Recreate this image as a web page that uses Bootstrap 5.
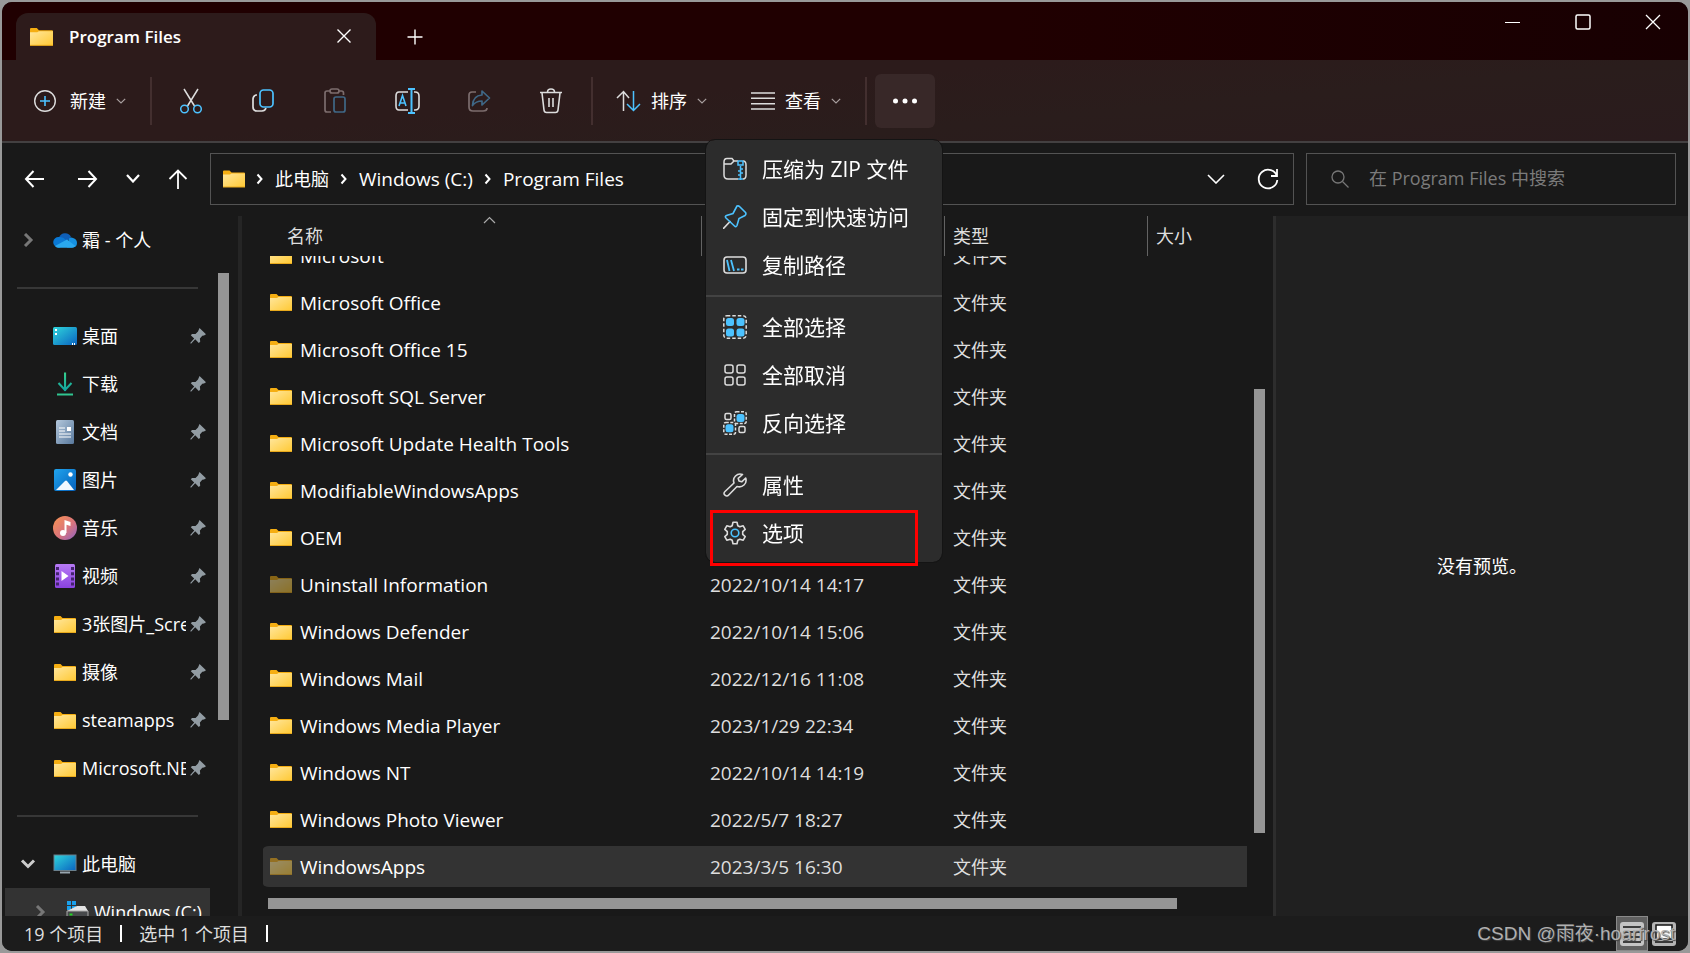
<!DOCTYPE html>
<html lang="zh-CN" data-bs-theme="dark">
<head>
<meta charset="utf-8">
<meta name="viewport" content="width=device-width, initial-scale=1">
<title>Program Files</title>
<link href="https://cdn.jsdelivr.net/npm/bootstrap@5.3.0/dist/css/bootstrap.min.css" rel="stylesheet">
<style>
  :root { --panel:#191919; --accent:#4cc2ff; --line:#535353; --thumb:#959595; }
  body { background:#999; font-family:"Open Sans","Noto Sans CJK SC",sans-serif; font-size:18px; line-height:24px; color:#fff; padding:2px; }
  svg { display:block; flex:none; }
  .latin { font-size:19px; }
  .explorer { background:var(--panel); border-radius:10px; }
  .btn { --bs-btn-color:#fff; --bs-btn-padding-x:0; --bs-btn-padding-y:0; --bs-btn-font-size:18px; --bs-btn-line-height:24px; --bs-btn-border-width:0px; --bs-btn-disabled-color:#fff; }

  /* title bar */
  .titlebar { height:58px; background:linear-gradient(90deg,#200001 60%,#180002); padding-left:14px; border-radius:10px 10px 0 0; }
  .tab { width:360px; height:47px; background:#2d1b1b; border-radius:12px 12px 0 0; padding:0 22px 0 14px; gap:16px; }
  .tab-title { font-size:17px; font-weight:600; }
  .new-tab { height:47px; }
  .caption { width:70px; height:40px; }

  /* command bar */
  .commands { height:83px; background:linear-gradient(175deg,#2c1b1b 40%,#2a1d1c 65%,#2a1b1d); border-bottom:2px solid #434041; padding-left:32px; }
  .tool { width:48px; height:54px; }
  .tool-label { margin:0 10px; }
  .rule { width:2px; height:48px; background:#432f2f; }
  .tools { margin-left:15px; }
  .sort-menu { margin-left:23px; }
  .view-menu { margin-left:44px; }
  .more { width:60px; height:54px; border-radius:6px; background:#382828; }
  .more-menu { --bs-dropdown-bg:#2c2c2c; --bs-dropdown-border-color:#141414; --bs-dropdown-padding-y:5px; --bs-dropdown-border-radius:10px;
    --bs-dropdown-link-color:#fff; --bs-dropdown-item-padding-x:17px; --bs-dropdown-item-padding-y:0; --bs-dropdown-font-size:21px;
    --bs-dropdown-divider-bg:#434343; --bs-dropdown-divider-margin-y:6px; --bs-dropdown-min-width:238px; top:65px; right:-8px; }
  .more-menu .dropdown-item { height:48px; gap:15px; }
  .more-menu .dropdown-divider { border-width:2px; opacity:1; }
  .callout { position:absolute; inset:1px 24px -9px 4px; border:3px solid #f00; pointer-events:none; }

  /* address row */
  .address { height:73px; padding:0 12px 2px 22px; }
  .field { height:52px; border:1px solid var(--line); }
  .back { margin-right:34px; }
  .path { margin:0 12px 0 22px; padding:0 14px 0 12px; }
  .search { width:370px; }
  .search input { background:none !important; border:0; box-shadow:none !important; color:#fff; font-size:18px; padding:0; }
  .search input::placeholder { color:#7b7b7b; opacity:1; }

  /* navigation pane */
  .nav-pane { width:240px; border-right:4px solid #252525; }
  .tree { width:208px; padding-left:3px; }
  .tree-item { height:48px; color:#fff; padding-left:15px; text-decoration:none; }
  .tree-item:hover { color:#fff; }
  .twist { width:16px; }
  .tree-icon { width:24px; margin-left:17px; margin-right:5px; }
  .tree-label { width:104px; overflow:hidden; white-space:nowrap; }
  .tree-rule { height:2px; background:#373737; margin:23px 12px; }
  .current { background:#333; padding-left:27px; }
  .current .tree-label { width:116px; }
  .thumb { background:var(--thumb); flex:none; }
  .nav-thumb { width:11px; height:447px; margin-left:8px; margin-top:57px; }
  .list-thumb { width:11px; height:444px; margin:173px 8px 0 7px; }
  .wide-thumb { width:90%; height:11px; margin:6px 0 0 5px; }
  .wide-track { height:24px; }

  /* file list */
  .list-view { padding-left:21px; }
  .list-scroll { overflow:hidden; }
  .files { table-layout:fixed; border-collapse:separate; border-spacing:0; width:100%; }
  .files th { position:sticky; top:0; z-index:1; height:40px; background:var(--panel); font-weight:400; color:#dedede; border-right:1px solid #636363; padding:0 0 0 8px; }
  .files th:first-child { padding-left:24px; }
  .files th:last-child { border-right:0; }
  .files td { height:47px; padding:0 0 0 8px; border:solid transparent; border-width:3px 0; background-clip:padding-box; color:#dedede; white-space:nowrap; }
  .files td:first-child { padding-left:7px; color:#fff; border-radius:6px 0 0 6px; }
  .files .picked td { background-color:#333; }
  .sort-mark { position:absolute; left:220px; top:0; }
  .faded { opacity:.5; }
  .preview { width:415px; background:#202020; border-left:3px solid #2d2d2d; }

  /* status bar */
  .status { height:35px; background:#1c1c1c; color:#dedede; border-radius:0 0 10px 10px; padding-left:22px; padding-right:8px; }
  .tick { width:2px; height:17px; background:#fff; margin:0 17px; }
  .view-btn { width:32px; height:35px; }
  .view-btn.on { background:#606060; border:1px solid #8a8a8a; border-radius:0; }
  .watermark { position:absolute; right:13px; top:6px; font:19px/24px "Liberation Sans","Noto Sans CJK SC",sans-serif; color:#b0b0b0; text-shadow:1px 1px 1px #444; pointer-events:none; }
</style>
</head>
<body class="vh-100 overflow-hidden">
<svg width="0" height="0" class="position-absolute" aria-hidden="true">
  <defs>
    <linearGradient id="gFolder" x1="0" y1="0" x2="1" y2="1"><stop offset="0" stop-color="#ffe69c"/><stop offset="1" stop-color="#ffc934"/></linearGradient>
    <linearGradient id="gDesk" x1="0" y1="0" x2="1" y2="1"><stop offset="0" stop-color="#2fd6dc"/><stop offset="1" stop-color="#0a63c0"/></linearGradient>
    <linearGradient id="gDoc" x1="0" y1="0" x2="1" y2="1"><stop offset="0" stop-color="#b4c8dc"/><stop offset="1" stop-color="#58789c"/></linearGradient>
    <linearGradient id="gPic" x1="0" y1="0" x2="1" y2="1"><stop offset="0" stop-color="#20a4ee"/><stop offset="1" stop-color="#0560ba"/></linearGradient>
    <linearGradient id="gMus" x1="0" y1="0" x2="1" y2="1"><stop offset="0" stop-color="#f99350"/><stop offset=".55" stop-color="#d9747c"/><stop offset="1" stop-color="#8d62c4"/></linearGradient>
    <linearGradient id="gVid" x1="0" y1="0" x2="0" y2="1"><stop offset="0" stop-color="#b77af5"/><stop offset="1" stop-color="#8a42e0"/></linearGradient>
    <linearGradient id="gDown" x1="0" y1="0" x2="0" y2="1"><stop offset="0" stop-color="#36cf8d"/><stop offset="1" stop-color="#12a5a0"/></linearGradient>
  </defs>
  <symbol id="folder" viewBox="0 0 22 17"><path d="M0 1Q0 0 1 0h5.500l2 2H21q1 0 1 1v4H0z" fill="#f5ae12"/><path d="M0 4h7l1.500-1H22v13.500H0z" fill="url(#gFolder)"/><path d="M0 16.500h22" stroke="#e8a91c"/></symbol>
  <symbol id="pin" viewBox="0 0 16 16"><path d="M9.500 0 16 6.200l-2 1.300-1.700.3-2.400 2.600.3 3.300-1.400 1.200-3.600-3.700L1 15.800l-.8-.8 4-4.500L.8 7.200 2 5.900l3.500.2 2.500-2.500z" fill="#929ca3"/></symbol>
  <symbol id="down" viewBox="0 0 10 6" fill="none" stroke="#a9a0a0" stroke-width="1.200"><path d="m.8.8 4.200 4.200L9.200.8"/></symbol>
  <symbol id="crumb" viewBox="0 0 8 12" fill="none" stroke="#fff" stroke-width="2"><path d="m1.500 1.500 4 4.500-4 4.500"/></symbol>
</svg>

<main class="explorer d-flex flex-column h-100">
  <header class="titlebar d-flex flex-shrink-0">
    <div class="tab d-flex align-items-center align-self-end">
      <svg width="23" height="18"><use href="#folder"/></svg>
      <span class="tab-title flex-grow-1">Program Files</span>
      <button class="btn" aria-label="关闭标签页"><svg width="20" height="16" viewBox="0 0 20 16" fill="none" stroke="#fff" stroke-width="1.400"><path d="m3.500.500 13 13m0-13-13 13"/></svg></button>
    </div>
    <button class="btn new-tab align-self-end ms-4 px-1" aria-label="新标签页"><svg width="22" height="18" viewBox="0 0 22 18" fill="none" stroke="#fff" stroke-width="1.400"><path d="M11 1.500v15M3.500 9h15"/></svg></button>
    <div class="ms-auto d-flex">
      <button class="btn caption" aria-label="最小化"><svg class="mx-auto" width="16" height="16" fill="none" stroke="#fff" stroke-width="1"><path d="M0 8.500h15"/></svg></button>
      <button class="btn caption" aria-label="最大化"><svg class="mx-auto" width="16" height="16" fill="none" stroke="#fff" stroke-width="1.500"><rect x="1" y="1" width="14" height="14" rx="1.500"/></svg></button>
      <button class="btn caption" aria-label="关闭"><svg class="mx-auto" width="16" height="16" fill="none" stroke="#fff" stroke-width="1.300"><path d="m1 1 14 14m0-14L1 15"/></svg></button>
    </div>
  </header>

  <div class="commands d-flex align-items-center flex-shrink-0">
    <button class="btn d-flex align-items-center">
      <svg width="22" height="24" viewBox="0 0 22 24" fill="none"><circle cx="11" cy="12" r="10.300" stroke="#ddd" stroke-width="1.400"/><path d="M11 7v10M6 12h10" stroke="#4cc2ff" stroke-width="1.600"/></svg>
      <span class="tool-label ps-1">新建</span>
      <svg width="10" height="6"><use href="#down"/></svg>
    </button>
    <span class="rule ms-4"></span>
    <div class="tools d-flex gap-4">
      <button class="btn tool" aria-label="剪切"><svg class="mx-auto" width="24" height="26" viewBox="0 0 24 26" fill="none" stroke-width="1.500"><path d="m5 1 10.500 17M19 1 8.500 18" stroke="#ddd"/><g stroke="#4cc2ff"><circle cx="5.500" cy="21" r="3.800"/><circle cx="18.500" cy="21" r="3.800"/></g></svg></button>
      <button class="btn tool" aria-label="复制"><svg class="mx-auto" width="24" height="26" viewBox="0 0 24 26" fill="none" stroke-width="1.700"><path d="M6 7H5Q2 8 2 11v8q0 4 4 4h5q3 0 4-3" stroke="#ddd"/><rect x="9" y="2" width="13" height="17" rx="3.500" stroke="#4cc2ff"/></svg></button>
      <button class="btn tool" disabled aria-label="粘贴"><svg class="mx-auto" width="24" height="26" viewBox="0 0 24 26" fill="none" stroke-width="1.700"><g stroke="#a7999a"><path d="M7 3H4Q2 3 2 5v17q0 2 2 2h4M16 3h2.500q2 0 2 2v2"/><rect x="7" y="1" width="9" height="4" rx="2"/></g><rect x="11" y="9" width="11" height="15" rx="2" stroke="#4a91c0"/></svg></button>
      <button class="btn tool" aria-label="重命名"><svg class="mx-auto" width="26" height="26" viewBox="0 0 26 26" fill="none" stroke-width="1.600"><path d="M14 4H5Q2 4 2 8v10q0 4 3 4h9M20 4h1q4 0 4 4v10q0 4-4 4h-1" stroke="#ddd"/><path d="M14 1h7M14 25h7M17.500 1v24" stroke="#4cc2ff" stroke-width="2"/><path d="m5 18 3.500-10.500L12 18M6 15h5" stroke="#4cc2ff"/></svg></button>
      <button class="btn tool" disabled aria-label="共享"><svg class="mx-auto" width="24" height="26" viewBox="0 0 24 26" fill="none" stroke-width="1.700"><path d="M9 4H5Q2 4 2 7v12q0 4 4 4h10q4 0 4-3" stroke="#a7999a"/><path d="m15 3 7.500 7-7.500 7v-4q-6 0-9.500 4.500Q6 7.500 15 7z" stroke="#4a91c0" stroke-linejoin="round"/></svg></button>
      <button class="btn tool" aria-label="删除"><svg class="mx-auto" width="24" height="26" viewBox="0 0 24 26" fill="none" stroke="#ddd" stroke-width="1.600"><path d="M1 4.500h22M8.500 4q0-3 3.500-3t3.500 3M3 5l2 17q.3 2.500 2.500 2.500h9q2.200 0 2.500-2.500L21 5M10 10v9M14 10v9"/></svg></button>
    </div>
    <span class="rule ms-3"></span>
    <button class="btn d-flex align-items-center sort-menu">
      <svg width="25" height="22" viewBox="0 0 25 22" fill="none" stroke-width="1.500"><path d="M7.500 21V2M1 8l6.500-6.500L13 8" stroke="#ddd"/><path d="M17.500 1v19M11 14l6.500 6.500L24 14" stroke="#4cc2ff"/></svg>
      <span class="tool-label">排序</span><svg width="10" height="6"><use href="#down"/></svg>
    </button>
    <button class="btn d-flex align-items-center view-menu">
      <svg width="24" height="18" fill="none" stroke="#ddd" stroke-width="1.500"><path d="M0 1h24M0 6.300h24M0 11.700h24M0 17h24"/></svg>
      <span class="tool-label">查看</span><svg width="10" height="6"><use href="#down"/></svg>
    </button>
    <span class="rule ms-4"></span>
    <div class="dropdown ms-2">
      <button class="btn more" aria-label="查看更多" aria-expanded="true"><svg class="mx-auto" width="24" height="6" fill="#fff"><circle cx="2.500" cy="3" r="2.500"/><circle cx="12" cy="3" r="2.500"/><circle cx="21.500" cy="3" r="2.500"/></svg></button>
      <div class="dropdown-menu more-menu show">
        <button class="dropdown-item d-flex align-items-center"><svg width="24" height="24" viewBox="0 0 24 24" fill="none" stroke="#ddd" stroke-width="1.500"><path d="M15 4h-4L9 1.500H4Q1 1.500 1 5v13q0 4 4 4h10M1 7h7l3-3M20 4q3 0 3 4v10q0 4-3 4"/><path d="M15 4h5M17.500 9v14M15 4v4h5V4M17.500 12H20M17.500 16H20M15 14h2.500M15 18h2.500M15 22h5" stroke="#4cc2ff"/></svg>压缩为 ZIP 文件</button>
        <button class="dropdown-item d-flex align-items-center"><svg width="24" height="24" viewBox="0 0 24 24" fill="none" stroke-width="1.600"><path d="m0 24 7.500-8" stroke="#ddd"/><path d="M14 1q1.500-.5 2.500.5l6 6q1 1.500-.5 3l-6 3-2 7q-1 2-2.500.5L3 13q-1.500-1.500.5-2.500l6.500-2z" stroke="#4cc2ff"/></svg>固定到快速访问</button>
        <button class="dropdown-item d-flex align-items-center"><svg width="24" height="24" viewBox="0 0 24 24" fill="none"><rect x="1" y="4" width="22" height="16" rx="3" stroke="#ddd" stroke-width="1.600"/><path d="m4 7 2.500 11M8 7l3 11M14 16.500h2.500M18 16.500h2.500" stroke="#4cc2ff" stroke-width="1.800"/></svg>复制路径</button>
        <hr class="dropdown-divider">
        <button class="dropdown-item d-flex align-items-center"><svg width="24" height="24" viewBox="0 0 24 24"><rect x=".8" y=".8" width="22.400" height="22.400" rx="3" fill="none" stroke="#ddd" stroke-width="1.500" stroke-dasharray="3.500 2"/><g fill="#4cc2ff"><rect x="3" y="3" width="8" height="8" rx="2.500"/><rect x="13.500" y="3" width="8" height="8" rx="2.500"/><rect x="3" y="13.500" width="8" height="8" rx="2.500"/><rect x="13.500" y="13.500" width="8" height="8" rx="2.500"/></g></svg>全部选择</button>
        <button class="dropdown-item d-flex align-items-center"><svg width="24" height="24" viewBox="0 0 24 24" fill="none" stroke="#ddd" stroke-width="1.500"><rect x="2" y="2" width="8" height="8" rx="2"/><rect x="14" y="2" width="8" height="8" rx="2"/><rect x="2" y="14" width="8" height="8" rx="2"/><rect x="14" y="14" width="8" height="8" rx="2"/></svg>全部取消</button>
        <button class="dropdown-item d-flex align-items-center"><svg width="24" height="24" viewBox="0 0 24 24" fill="none" stroke="#ddd" stroke-width="1.500"><rect x="2" y="2.500" width="6" height="6" rx="1.500"/><rect x="16" y="15.500" width="6" height="6" rx="1.500"/><g stroke-dasharray="3 1.500"><rect x="11.500" y=".8" width="11.700" height="11.700" rx="2"/><rect x=".8" y="11.500" width="11.700" height="11.700" rx="2"/></g><g fill="#4cc2ff" stroke="none"><rect x="13.500" y="3" width="8" height="8" rx="2.500"/><rect x="2.500" y="13.300" width="8" height="8" rx="2.500"/></g></svg>反向选择</button>
        <hr class="dropdown-divider">
        <button class="dropdown-item d-flex align-items-center"><svg width="24" height="24" viewBox="0 0 24 24" fill="none" stroke="#ddd" stroke-width="1.600" stroke-linejoin="round"><path d="M19.500 1.500q-4-1.500-7 1.500t-1.500 7l-9 8.500q-2 2 0 3.700t3.700-.2L14 13.500q4 1.300 7-1.500t1.700-7l-4 3.800-2.700-.8-.8-2.700z"/></svg>属性</button>
        <button class="dropdown-item d-flex align-items-center position-relative"><svg width="24" height="24" viewBox="0 0 24 24" fill="none" stroke-width="1.600"><path d="M10 1.200h4l.8 3.500 2 1.100 3.400-1 2 3.500-2.500 2.400v2.600l2.500 2.400-2 3.500-3.400-1-2 1.100-.8 3.500h-4l-.8-3.500-2-1.100-3.400 1-2-3.500 2.500-2.400v-2.600L1.800 8.300l2-3.500 3.400 1 2-1.100z" stroke="#ddd" stroke-linejoin="round"/><circle cx="12" cy="12" r="3.800" stroke="#4cc2ff"/></svg>选项<span class="callout"></span></button>
      </div>
    </div>
  </div>

  <div class="address d-flex align-items-center flex-shrink-0">
    <div class="d-flex align-items-center">
      <button class="btn back" aria-label="后退"><svg width="20" height="20" viewBox="0 0 20 20" fill="none" stroke="#fff" stroke-width="2"><path d="M20 10H2M9.500 2 2 10l7.500 8"/></svg></button>
      <button class="btn me-4" aria-label="前进"><svg width="20" height="20" viewBox="0 0 20 20" fill="none" stroke="#fff" stroke-width="2"><path d="M0 10h18M10.500 2l7.500 8-7.500 8"/></svg></button>
      <button class="btn ms-1 me-4" aria-label="最近的位置"><svg width="14" height="9" fill="none" stroke="#fff" stroke-width="2.200"><path d="m1 1 6 6.500L13 1"/></svg></button>
      <button class="btn ms-1" aria-label="向上"><svg width="20" height="20" viewBox="0 0 20 20" fill="none" stroke="#fff" stroke-width="1.800"><path d="M10 20V1.500M1.500 10 10 1.500l8.500 8.500"/></svg></button>
    </div>
    <div class="field path flex-grow-1 d-flex align-items-center">
      <svg width="22" height="18"><use href="#folder"/></svg>
      <svg class="mx-2" width="14" height="12"><use href="#crumb"/></svg>
      <span>此电脑</span>
      <svg class="mx-2" width="14" height="12"><use href="#crumb"/></svg>
      <span class="latin">Windows (C:)</span>
      <svg class="mx-2" width="14" height="12"><use href="#crumb"/></svg>
      <span class="latin">Program Files</span>
      <button class="btn ms-auto me-4" aria-label="以前的位置"><svg width="18" height="10" fill="none" stroke="#fff" stroke-width="1.600"><path d="m1 1 8 8 8-8"/></svg></button>
      <button class="btn ms-2" aria-label="刷新"><svg width="22" height="22" viewBox="0 0 22 22" fill="none" stroke="#fff" stroke-width="1.800"><path d="M20 8.500A9.300 9.300 0 1 0 20.300 12M20 1v7h-6"/></svg></button>
    </div>
    <label class="field search d-flex align-items-center px-4" for="q">
      <svg class="me-3" width="18" height="18" fill="none" stroke="#777" stroke-width="1.300"><circle cx="7" cy="7" r="6"/><path d="m11.500 11.500 6 6"/></svg>
      <input id="q" class="form-control ms-1" type="text" placeholder="在 Program Files 中搜索">
    </label>
  </div>

  <div class="d-flex flex-grow-1 overflow-hidden">
    <nav class="nav-pane d-flex overflow-hidden flex-shrink-0">
      <div class="tree" id="tree"></div>
      <div class="thumb nav-thumb"></div>
    </nav>
    <section class="list-view flex-grow-1 d-flex flex-column overflow-hidden">
      <div class="d-flex flex-grow-1 overflow-hidden">
        <div class="list-scroll flex-grow-1" id="list">
          <table class="files">
            <colgroup><col><col style="width:243px"><col style="width:203px"><col style="width:99px"></colgroup>
            <thead><tr><th>名称<svg class="sort-mark" width="13" height="8" fill="none" stroke="#aaa" stroke-width="1.200"><path d="m1 7 5.500-5.500L12 7"/></svg></th><th></th><th>类型</th><th>大小</th></tr></thead>
            <tbody id="rows"></tbody>
          </table>
          <div class="pb-3"></div>
        </div>
        <div class="thumb list-thumb"></div>
      </div>
      <div class="wide-track d-flex flex-shrink-0"><div class="thumb wide-thumb"></div></div>
    </section>
    <aside class="preview d-flex align-items-center justify-content-center flex-shrink-0">没有预览。</aside>
  </div>

  <footer class="status d-flex align-items-center position-relative flex-shrink-0">
    <span>19 个项目</span><span class="tick"></span><span>选中 1 个项目</span><span class="tick"></span>
    <button class="btn view-btn on ms-auto" aria-label="详细信息"><svg class="mx-auto" width="24" height="24"><rect width="24" height="24" rx="3" fill="#c4c4c4"/><path d="M3 5h18M3 10h18M3 15h18M3 20h18" stroke="#111" stroke-width="1.500"/></svg></button>
    <button class="btn view-btn" aria-label="大图标"><svg class="mx-auto" width="24" height="24"><rect width="24" height="24" rx="3" fill="#b4b4b4"/><rect x="4" y="3" width="16" height="14" fill="#fff" stroke="#111" stroke-width="1.500"/><path d="M3 20h18" stroke="#111" stroke-width="1.500"/></svg></button>
    <span class="watermark">CSDN @雨夜·hoarfrost</span>
  </footer>
</main>

<script src="https://cdn.jsdelivr.net/npm/bootstrap@5.3.0/dist/js/bootstrap.bundle.min.js"></script>
<script>
  const folder = '<svg width="22" height="17"><use href="#folder"/></svg>';
  const icons = {
    folder,
    cloud: '<svg width="24" height="16" viewBox="0 0 24 16"><path d="M6 5.500A6.500 6.500 0 0 1 18 5l-5 6H5z" fill="#0f5fb8"/><path d="M5 15.500A5 5 0 0 1 6 5q4-.5 7 3l-6 7.500z" fill="#0a78d4"/><path d="M16 6.500q2-1.500 4-.5 4 1 4 5t-4 4.500h-6z" fill="#1590e0"/><path d="M2 14 14 7.500 22.500 14q-1.500 1.700-3.500 1.700H5Q3 15.600 2 14z" fill="#2aa8ee"/></svg>',
    desk: '<svg width="24" height="18"><rect width="24" height="18" rx="1.500" fill="url(#gDesk)"/><path d="M2 3h2M2 7h2M19 17h1M21 17h1" stroke="#fff" stroke-width="2"/></svg>',
    down: '<svg width="24" height="24" fill="none" stroke-width="2"><path d="M12 .5V18h.1V.5M5.500 11l6.500 7 6.500-7" stroke="url(#gDown)"/><path d="M4 22.500h16" stroke="#30c590"/></svg>',
    doc: '<svg width="24" height="24"><rect x="3" width="18" height="24" rx="1.500" fill="url(#gDoc)"/><path d="M6 8h6M6 11h6M6 14h12M6 17h12" stroke="#fff"/><path d="M14 7h4v4h-4z" fill="#fff"/></svg>',
    pic: '<svg width="24" height="22"><rect x="1" width="22" height="22" rx="2" fill="url(#gPic)"/><circle cx="17.500" cy="5.500" r="2.200" fill="#fff"/><path d="m3 21 9-9q1-.8 2 0l7 9z" fill="#f1f8ff"/></svg>',
    music: '<svg width="24" height="24"><circle cx="12" cy="12" r="12" fill="url(#gMus)"/><circle cx="10" cy="17" r="3" fill="#fff"/><path d="M11.500 17V4l6 2v4l-4-1.200V17z" fill="#fff"/></svg>',
    video: '<svg width="24" height="24"><rect x="2" width="20" height="24" rx="1.500" fill="url(#gVid)"/><path d="M4.500 3v19M19.500 3v19" stroke="#44236f" stroke-width="3" stroke-dasharray="3 2.200"/><path d="m8.500 7 7 5-7 5z" fill="#fff"/></svg>',
    pc: '<svg width="24" height="20"><rect x="1" y="1" width="22" height="15.500" fill="url(#gDesk)" stroke="#6a7f8c"/><path d="M7 18.500h10" stroke="#98a5ae" stroke-width="2"/></svg>',
    disk: '<svg width="24" height="24"><g fill="#1aa1ec"><path d="M2 1h4v4H2zM7 1h4v4H7zM2 6h4v4H2zM7 6h4v4H7z"/></g><path d="m12 6 8 0 3 5H2z" fill="#e4e4e4"/><path d="M2 11h21v8H2z" fill="#47494b" stroke="#aaa"/><path d="M4.500 14.500h3" stroke="#21d321" stroke-width="2"/></svg>'
  };
  const right = '<svg width="16" height="14" fill="none" stroke="#777" stroke-width="3"><path d="m5 1 6 6-6 6"/></svg>';
  const open = '<svg width="16" height="10" fill="none" stroke="#ccc" stroke-width="3"><path d="m2 1.500 6 6 6-6"/></svg>';
  const pin = '<svg width="16" height="16"><use href="#pin"/></svg>';
  // icon, label, pinned, twisty, extra class
  const tree = [
    ['cloud','霜 - 个人',0,right], null,
    ['desk','桌面',1], ['down','下载',1], ['doc','文档',1], ['pic','图片',1], ['music','音乐',1], ['video','视频',1],
    ['folder','3张图片_Screenshots',1], ['folder','摄像',1], ['folder','steamapps',1], ['folder','Microsoft.NET',1], null,
    ['pc','此电脑',0,open], ['disk','Windows (C:)',0,right,'current']
  ];
  document.getElementById('tree').innerHTML = tree.map(t => t
    ? `<a href="#" class="tree-item d-flex align-items-center ${t[4] || ''}"><span class="twist">${t[3] || ''}</span><span class="tree-icon d-flex justify-content-center">${icons[t[0]]}</span><span class="tree-label">${t[1]}</span>${t[2] ? '<span class="ms-1">' + pin + '</span>' : ''}</a>`
    : '<div class="tree-rule"></div>').join('');

  const files = [
    ['Microsoft',''], ['Microsoft Office',''], ['Microsoft Office 15',''], ['Microsoft SQL Server',''],
    ['Microsoft Update Health Tools',''], ['ModifiableWindowsApps',''], ['OEM',''],
    ['Uninstall Information','2022/10/14 14:17','faded'], ['Windows Defender','2022/10/14 15:06'], ['Windows Mail','2022/12/16 11:08'],
    ['Windows Media Player','2023/1/29 22:34'], ['Windows NT','2022/10/14 14:19'], ['Windows Photo Viewer','2022/5/7 18:27'],
    ['WindowsApps','2023/3/5 16:30','faded']
  ];
  document.getElementById('rows').innerHTML = files.map((f, i) =>
    `<tr class="${i === files.length - 1 ? 'picked' : ''}"><td><span class="d-flex align-items-center"><span class="me-2 ${f[2] || ''}">${folder}</span><span class="latin">${f[0]}</span></span></td><td class="latin">${f[1]}</td><td>文件夹</td><td></td></tr>`).join('');
  document.getElementById('list').scrollTop = 24;
</script>
</body>
</html>
